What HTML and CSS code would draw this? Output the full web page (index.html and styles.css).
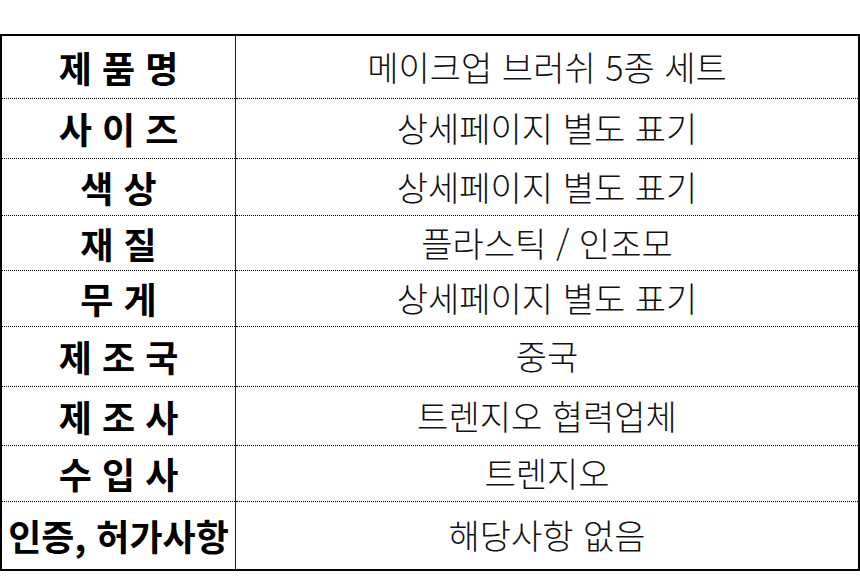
FILE: index.html
```html
<!DOCTYPE html>
<html lang="ko">
<head>
<meta charset="utf-8">
<link rel="stylesheet" href="styles.css">
</head>
<body>
<table class="spec">
  <tr class="r1"><th>제 품 명</th><td>메이크업 브러쉬 5종 세트</td></tr>
  <tr class="r2"><th>사 이 즈</th><td>상세페이지 별도 표기</td></tr>
  <tr class="r3"><th>색 상</th><td>상세페이지 별도 표기</td></tr>
  <tr class="r4"><th>재 질</th><td>플라스틱 / 인조모</td></tr>
  <tr class="r5"><th>무 게</th><td>상세페이지 별도 표기</td></tr>
  <tr class="r6"><th>제 조 국</th><td>중국</td></tr>
  <tr class="r7"><th>제 조 사</th><td>트렌지오 협력업체</td></tr>
  <tr class="r8"><th>수 입 사</th><td>트렌지오</td></tr>
  <tr class="r9"><th>인증, 허가사항</th><td>해당사항 없음</td></tr>
</table>
</body>
</html>
```

FILE: styles.css
```css
html, body {
  margin: 0;
  padding: 0;
  background: #fff;
}
body {
  padding-top: 34px;
  padding-left: 0;
}
.spec {
  border-collapse: collapse;
  width: 860px;
  border: 2px solid #000;
  font-family: "Noto Sans CJK KR", "Noto Sans", sans-serif;
  color: #000;
}
.spec th,
.spec td {
  padding: 0;
  text-align: center;
  vertical-align: middle;
  border-bottom: 1px dotted #000;
  line-height: 1;
}
.spec tr:last-child th,
.spec tr:last-child td {
  border-bottom: none;
}
.spec th {
  width: 233px;
  font-size: 36px;
  font-weight: 700;
  border-right: 1px solid #222;
}
.spec td {
  font-size: 34px;
  font-weight: 300;
  color: #111;
}
.r1 { height: 63px; }
.r2 { height: 60px; }
.r3 { height: 57px; }
.r4 { height: 55px; }
.r5 { height: 56px; }
.r6 { height: 60px; }
.r7 { height: 59px; }
.r8 { height: 56px; }
.r9 { height: 69px; }
```
